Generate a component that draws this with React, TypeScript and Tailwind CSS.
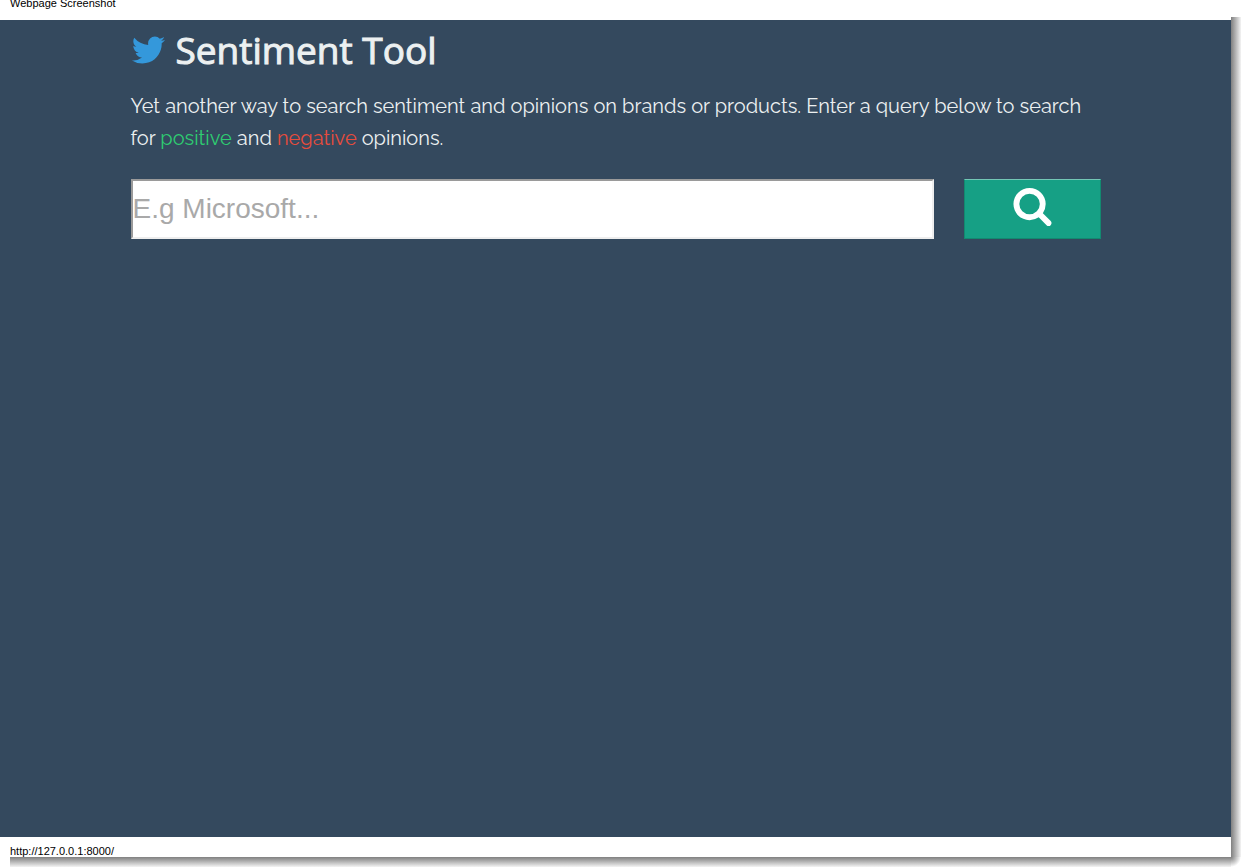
import React from "react";

function TwitterIcon() {
  return (
    <svg viewBox="64 0 1664 1792" className="h-[38px] w-[35px] shrink-0 fill-[#3498db]" aria-hidden="true">
      <path d="M1684 408q-67 98-162 167 1 14 1 42 0 130-38 259.5t-115.5 248.5-184.5 210.5-258 146-323 54.5q-271 0-496-145 35 4 78 4 225 0 401-138-105-2-188-64.5t-114-159.5q33 5 61 5 43 0 85-11-112-23-185.5-111.5t-73.5-205.5v-4q68 38 146 41-66-44-105-115t-39-154q0-88 44-163 121 149 294.5 238.5t371.5 99.5q-8-38-8-74 0-134 94.5-228.5t228.5-94.5q140 0 236 102 109-21 205-78-37 115-142 178 93-10 186-50z" />
    </svg>
  );
}

function SearchIcon() {
  return (
    <svg viewBox="0 0 1792 1792" className="size-[41px] fill-white" aria-hidden="true">
      <path d="M1216 832q0-185-131.5-316.5t-316.5-131.5-316.5 131.5-131.5 316.5 131.5 316.5 316.5 131.5 316.5-131.5 131.5-316.5zm512 832q0 52-38 90t-90 38q-54 0-90-38l-343-342q-179 124-399 124-143 0-273.5-55.5t-225-150-150-225-55.5-273.5 55.5-273.5 150-225 225-150 273.5-55.5 273.5 55.5 225 150 150 225 55.5 273.5q0 220-124 399l343 343q37 37 37 90z" />
    </svg>
  );
}

export default function App() {
  return (
    <div className="grid min-h-screen grid-cols-[1fr_10px] grid-rows-[1fr_10px] overflow-hidden bg-white">
      <div className="flex min-w-0 flex-col bg-white font-['Liberation_Sans',Arial,sans-serif]">
        <header className="flex h-5 items-start px-[10px] text-[11px] leading-[7px] text-black">
          Webpage Screenshot
        </header>
        <main className="flex-1 bg-[#34495e] px-4 pt-2 text-[#ecf0f1]">
          <div className="mx-auto max-w-[970px]">
            <h1 className="flex items-center gap-[10px] font-['Open_Sans',sans-serif] text-[37px] leading-[44px] font-normal [-webkit-text-stroke:1px_#ecf0f1]">
              <TwitterIcon />
              Sentiment Tool
            </h1>
            <p className="mt-[18px] font-['Raleway','Lato',sans-serif] text-[20px] leading-8">
              Yet another way to search sentiment and opinions on brands or products. Enter a query below to search
              for <span className="text-[#2ecc71]">positive</span> and{" "}
              <span className="text-[#e74c3c]">negative</span> opinions.
            </p>
            <form className="mt-[25px] flex gap-[30px]" onSubmit={(event) => event.preventDefault()}>
              <input
                type="text"
                aria-label="Search query"
                placeholder="E.g Microsoft..."
                className="h-[60px] min-w-0 flex-1 border-2 border-t-[#9a9a9a] border-r-[#eeeeee] border-b-[#eeeeee] border-l-[#9a9a9a] bg-white text-[28px] text-black placeholder:text-[#a9a9a9]"
              />
              <button
                type="submit"
                aria-label="Search"
                className="flex h-[60px] w-[137px] justify-center border border-t-[#73c6b5] border-r-[#128a70] border-b-[#128a70] border-l-[#128a70] bg-[#16a085] pt-[5px]"
              >
                <SearchIcon />
              </button>
            </form>
          </div>
        </main>
        <footer className="flex h-5 items-center px-[10px] pt-[7px] text-[11px] leading-3 text-black">
          http://127.0.0.1:8000/
        </footer>
      </div>
      <div className="mt-[17px] bg-linear-to-r from-[#808080] to-[#f4f4f4]" />
      <div className="ml-[10px] bg-linear-to-b from-[#808080] to-[#f4f4f4]" />
      <div className="bg-radial-[at_0%_0%] from-[#808080] to-white to-70%" />
    </div>
  );
}
